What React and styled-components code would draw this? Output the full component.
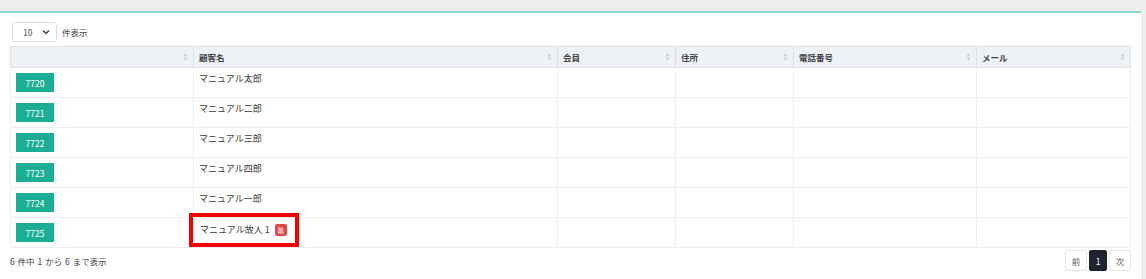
import React from 'react';
import styled, { createGlobalStyle } from 'styled-components';

const GlobalStyle = createGlobalStyle`
  html, body {
    margin: 0;
    background: #efefef;
    font-family: "Noto Sans CJK JP", "Noto Sans", sans-serif;
    color: #333;
  }
`;

const Page = styled.div`
  padding: 11px 5px 0 0;
  height: 279px;
  box-sizing: border-box;
`;

const Card = styled.div`
  background: #ffffff;
  border-top: 2px solid #8ad6c8;
  height: 268px;
  box-sizing: border-box;
  padding: 9px 10px 0 10px;
`;

const LengthRow = styled.div`
  display: flex;
  align-items: center;
  gap: 5px;
  margin-left: 2px;
  font-size: 8.5px;
  color: #444;
`;

const SelectBox = styled.div`
  width: 45px;
  height: 20px;
  box-sizing: border-box;
  border: 1px solid #dcdcdc;
  border-radius: 3px;
  display: flex;
  align-items: center;
  justify-content: space-between;
  padding: 0 6px 0 10px;
  font-size: 8.5px;
  color: #555;
`;

const Table = styled.table`
  margin-top: 4px;
  width: 1120px;
  border-collapse: collapse;
  table-layout: fixed;
  font-size: 9px;
`;

const Th = styled.th`
  box-sizing: border-box;
  height: 21px;
  padding: 0 5px;
  background: #eef2f7;
  border: 1px solid #dfe3e8;
  text-align: left;
  font-weight: 700;
  color: #444;
  font-size: 8.5px;
  width: ${(p) => p.$w}px;
`;

const ThInner = styled.div`
  display: flex;
  align-items: center;
  justify-content: space-between;
`;

const Td = styled.td`
  height: 30px;
  padding: 5px 6px 0 5px;
  box-sizing: border-box;
  vertical-align: top;
  border: 1px solid #eceef1;
  color: #3a3a3a;
  line-height: 12px;
`;

const IdBadge = styled.span`
  display: inline-flex;
  align-items: center;
  justify-content: center;
  width: 38px;
  height: 19px;
  background: #1aaf95;
  color: #fff;
  font-size: 8.5px;
`;

const Highlight = styled.span`
  position: relative;
  display: inline-flex;
  align-items: center;
  gap: 5px;
  margin: 1px 0 0 1px;

  &::after {
    content: '';
    position: absolute;
    left: -11px;
    top: -11px;
    width: 110px;
    height: 34px;
    box-sizing: border-box;
    border: 4px solid #f30000;
  }
`;

const DeadBadge = styled.span`
  display: inline-flex;
  align-items: center;
  justify-content: center;
  width: 12px;
  height: 12px;
  border-radius: 2px;
  background: #e04848;
  color: #fff;
  font-size: 6.5px;
`;

const Footer = styled.div`
  width: 1121px;
  display: flex;
  justify-content: space-between;
  align-items: center;
  margin-top: 2px;
`;

const Info = styled.div`
  font-size: 8.5px;
  color: #444;
  word-spacing: 1px;
`;

const Pager = styled.div`
  display: flex;
  gap: 2px;
`;

const PageBtn = styled.div`
  width: ${(p) => p.$w}px;
  height: 21px;
  box-sizing: border-box;
  display: flex;
  align-items: center;
  justify-content: center;
  font-size: 8.5px;
  border-radius: 2px;
  border: 1px solid ${(p) => (p.$active ? '#1d2330' : '#e6e6e6')};
  background: ${(p) => (p.$active ? '#1d2330' : '#fff')};
  color: ${(p) => (p.$active ? '#fff' : '#555')};
`;

const SortIcon = () => (
  <svg width="5" height="8" viewBox="0 0 5 8">
    <path d="M2.5 0.5 L4.5 3.2 L0.5 3.2 Z" fill="#c8ccd2" />
    <path d="M2.5 7.5 L4.5 4.8 L0.5 4.8 Z" fill="#c8ccd2" />
  </svg>
);

const Chevron = () => (
  <svg width="8" height="6" viewBox="0 0 8 6">
    <path d="M1 1.5 L4 4.5 L7 1.5" fill="none" stroke="#444" strokeWidth="1.5" />
  </svg>
);

const columns = [
  { label: '', w: 183 },
  { label: '顧客名', w: 364 },
  { label: '会員', w: 118 },
  { label: '住所', w: 118 },
  { label: '電話番号', w: 183 },
  { label: 'メール', w: 154 },
];

const rows = [
  { id: 7720, name: 'マニュアル太郎' },
  { id: 7721, name: 'マニュアル二郎' },
  { id: 7722, name: 'マニュアル三郎' },
  { id: 7723, name: 'マニュアル四郎' },
  { id: 7724, name: 'マニュアル一郎' },
  { id: 7725, name: 'マニュアル故人 1', dead: true },
];

export default function App() {
  return (
    <>
      <GlobalStyle />
      <Page>
        <Card>
          <LengthRow>
            <SelectBox>
              <span>10</span>
              <Chevron />
            </SelectBox>
            <span>件表示</span>
          </LengthRow>
          <Table>
            <thead>
              <tr>
                {columns.map((c, i) => (
                  <Th key={i} $w={c.w}>
                    <ThInner>
                      <span>{c.label}</span>
                      <SortIcon />
                    </ThInner>
                  </Th>
                ))}
              </tr>
            </thead>
            <tbody>
              {rows.map((r) => (
                <tr key={r.id}>
                  <Td>
                    <IdBadge>{r.id}</IdBadge>
                  </Td>
                  <Td>
                    {r.dead ? (
                      <Highlight>
                        {r.name}
                        <DeadBadge>故</DeadBadge>
                      </Highlight>
                    ) : (
                      r.name
                    )}
                  </Td>
                  <Td />
                  <Td />
                  <Td />
                  <Td />
                </tr>
              ))}
            </tbody>
          </Table>
          <Footer>
            <Info>6 件中 1 から 6 まで表示</Info>
            <Pager>
              <PageBtn $w={22}>前</PageBtn>
              <PageBtn $w={18} $active>1</PageBtn>
              <PageBtn $w={22}>次</PageBtn>
            </Pager>
          </Footer>
        </Card>
      </Page>
    </>
  );
}
